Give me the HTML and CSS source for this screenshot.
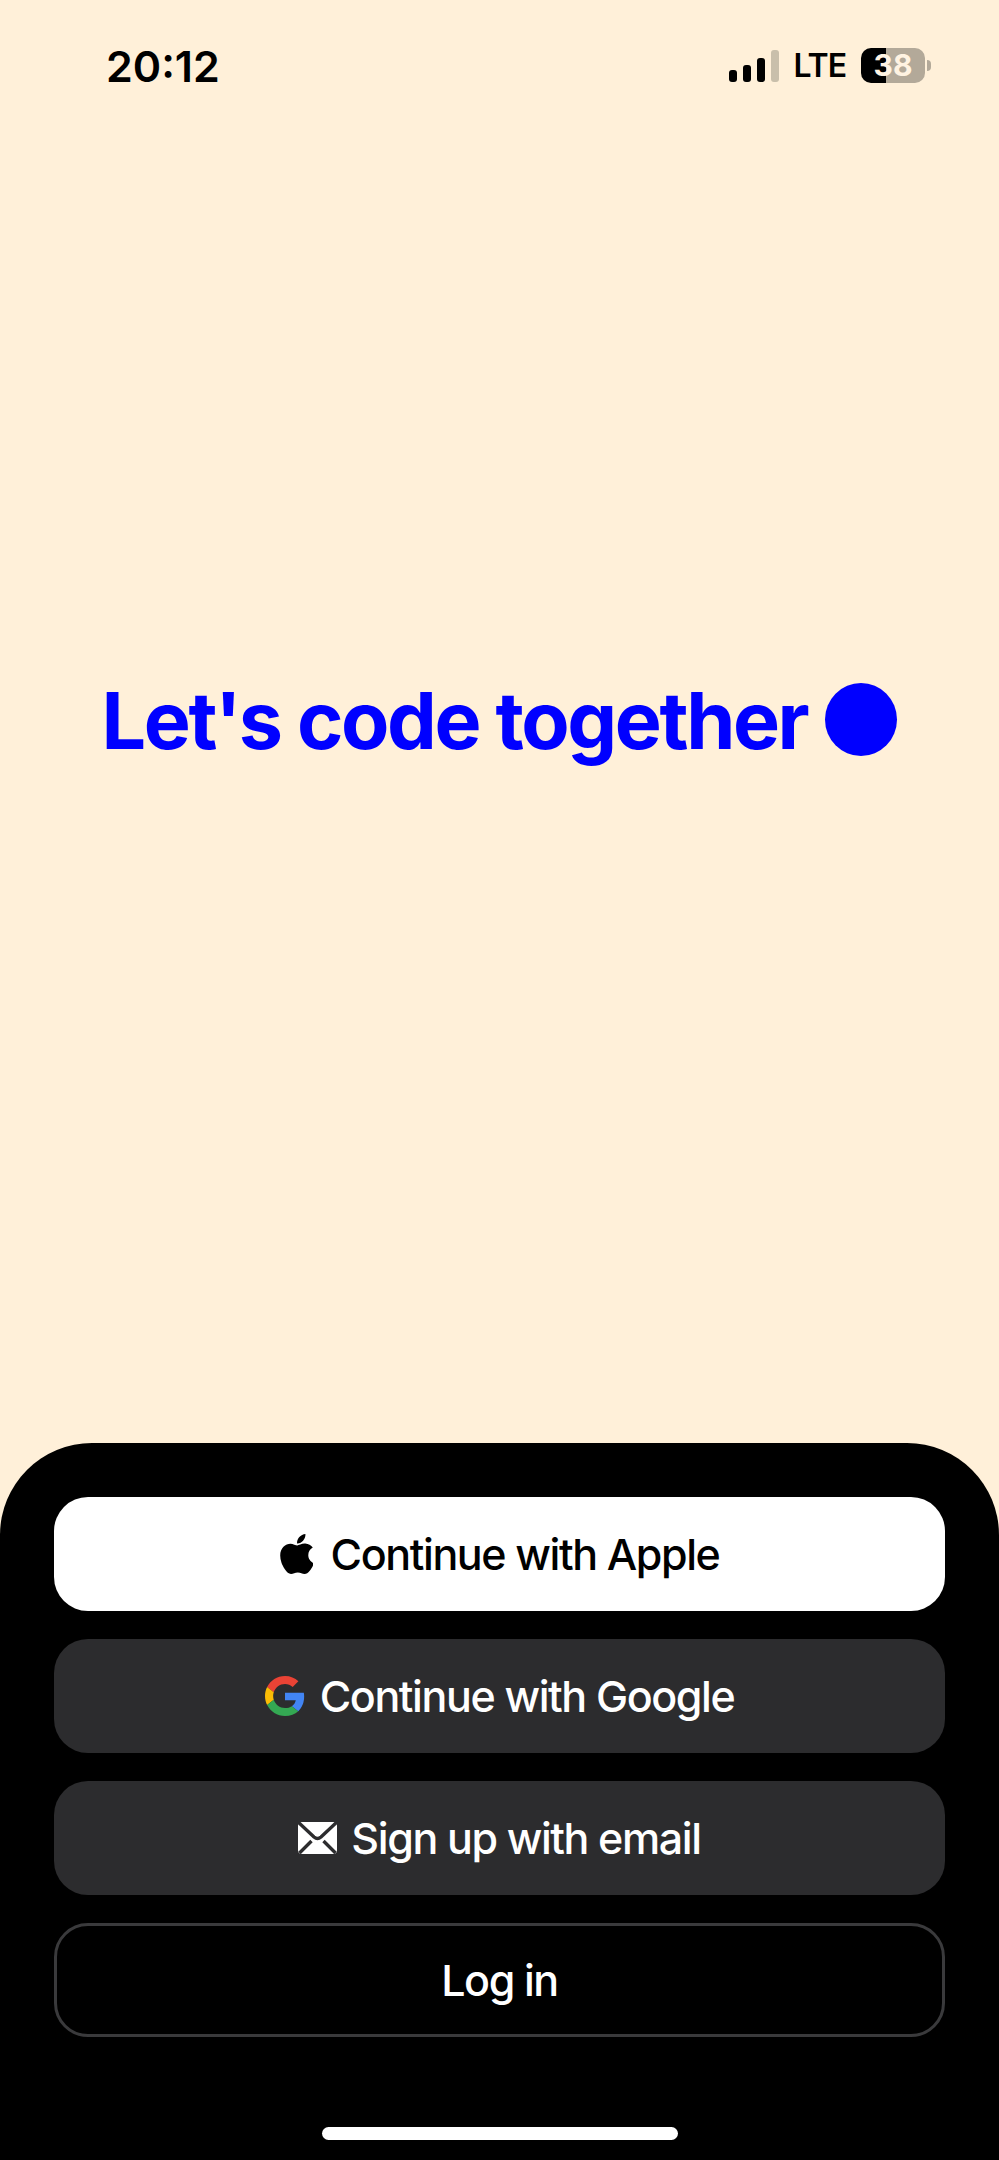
FILE: index.html
```html
<!DOCTYPE html>
<html lang="en">
<head>
<meta charset="utf-8">
<title>Let's code together</title>
<link rel="stylesheet" href="styles.css">
</head>
<body>
<div class="screen">
  <header class="status">
    <span class="time">20:12</span>
    <div class="indicators">
      <div class="signal">
        <span class="bar bar-1"></span>
        <span class="bar bar-2"></span>
        <span class="bar bar-3"></span>
        <span class="bar bar-4"></span>
      </div>
      <span class="network">LTE</span>
      <div class="battery-wrap">
        <div class="battery">38</div>
        <span class="nub"></span>
      </div>
    </div>
  </header>
  <main class="hero">
    <h1 class="title">Let's code together</h1>
    <span class="dot"></span>
  </main>
  <section class="sheet">
    <button class="btn btn-apple">
      <svg class="icon-apple" viewBox="4 32 365 448" aria-hidden="true"><path fill="#000" d="M318.7 268.7c-.2-36.7 16.4-64.4 50-84.8-18.8-26.9-47.2-41.7-84.7-44.6-35.5-2.8-74.3 20.7-88.5 20.7-15 0-49.4-19.7-76.4-19.7C63.3 141.2 4 184.8 4 273.5q0 39.3 14.4 81.2c12.8 36.7 59 126.7 107.2 125.2 25.2-.6 43-17.9 75.8-17.9 31.8 0 48.3 17.9 76.4 17.9 48.6-.7 90.4-82.5 102.6-119.3-65.2-30.7-61.7-90-61.7-91.9zm-56.6-164.2c27.3-32.4 24.8-61.9 24-72.5-24.1 1.4-52 16.4-67.9 34.9-17.5 19.8-27.8 44.3-25.6 71.9 26.1 2 49.9-11.4 69.5-34.3z"/></svg>
      Continue with Apple
    </button>
    <button class="btn btn-dark btn-google">
      <svg class="icon-google" viewBox="0 0 48 48" aria-hidden="true">
        <path fill="#EA4335" d="M24 9.5c3.54 0 6.71 1.22 9.21 3.6l6.85-6.85C35.9 2.38 30.47 0 24 0 14.62 0 6.51 5.38 2.56 13.22l7.98 6.19C12.43 13.72 17.74 9.5 24 9.5z"/>
        <path fill="#4285F4" d="M46.98 24.55c0-1.57-.15-3.09-.38-4.55H24v9.02h12.94c-.58 2.96-2.26 5.48-4.78 7.18l7.73 6c4.51-4.18 7.09-10.36 7.09-17.65z"/>
        <path fill="#FBBC05" d="M10.53 28.59c-.48-1.45-.76-2.99-.76-4.59s.27-3.14.76-4.59l-7.98-6.19C.92 16.46 0 20.12 0 24c0 3.88.92 7.54 2.56 10.78l7.97-6.19z"/>
        <path fill="#34A853" d="M24 48c6.48 0 11.93-2.13 15.89-5.81l-7.73-6c-2.15 1.45-4.92 2.3-8.16 2.3-6.26 0-11.57-4.22-13.47-9.91l-7.98 6.19C6.51 42.62 14.62 48 24 48z"/>
      </svg>
      Continue with Google
    </button>
    <button class="btn btn-dark btn-mail">
      <svg class="icon-mail" viewBox="0 0 39 32" aria-hidden="true">
        <rect width="39" height="32" rx="4" fill="#fff"/>
        <path d="M0 0 L16 15 Q19.5 18 23 15 L39 0" fill="none" stroke="#2c2c2e" stroke-width="3.4"/>
        <path d="M1.5 31 L13.5 19 M37.5 31 L25.5 19" fill="none" stroke="#2c2c2e" stroke-width="3.4"/>
      </svg>
      Sign up with email
    </button>
    <button class="btn btn-outline">Log in</button>
    <div class="home-row"><span class="home-bar"></span></div>
  </section>
</div>
</body>
</html>
```

FILE: styles.css
```css
* { box-sizing: border-box; }

html, body {
  margin: 0;
  padding: 0;
  background: #fff0d9;
}

.screen {
  width: 999px;
  height: 2160px;
  display: flex;
  flex-direction: column;
  overflow: hidden;
  font-family: Inter, "Liberation Sans", sans-serif;
}

.status {
  height: 120px;
  padding: 44px 68px 0 106px;
  display: flex;
  justify-content: space-between;
  align-items: flex-start;
  color: #000;
}

.time {
  font-size: 43px;
  font-weight: 600;
  line-height: 44px;
}

.indicators {
  display: flex;
  align-items: center;
  padding-top: 4px;
}

.signal {
  display: flex;
  align-items: flex-end;
  gap: 6px;
  height: 32px;
}

.bar {
  width: 8px;
  border-radius: 3px;
  background: #000;
}
.bar-1 { height: 12px; }
.bar-2 { height: 17px; }
.bar-3 { height: 24px; }
.bar-4 { height: 32px; background: #c9bfab; }

.network {
  margin-left: 14px;
  font-size: 32px;
  font-weight: 600;
  line-height: 34px;
  letter-spacing: -1px;
}

.battery-wrap {
  display: flex;
  align-items: center;
  margin-left: 15px;
}

.battery {
  width: 64px;
  height: 35px;
  border-radius: 10px;
  background: linear-gradient(90deg, #000 39%, #b3a999 39%);
  color: #fff3e2;
  font-size: 30px;
  font-weight: 700;
  line-height: 35px;
  text-align: center;
}

.nub {
  width: 4px;
  height: 11px;
  margin-left: 2px;
  border-radius: 0 4px 4px 0;
  background: #b3a999;
}

.hero {
  flex: 1;
  display: flex;
  align-items: center;
  justify-content: center;
  gap: 18px;
  padding-bottom: 124px;
  color: #0000ff;
}

.title {
  margin: 0;
  font-size: 79px;
  font-weight: 700;
  line-height: 90px;
  letter-spacing: -2.4px;
}

.dot {
  width: 72px;
  height: 73px;
  border-radius: 50%;
  background: #0000ff;
}

.sheet {
  height: 717px;
  padding: 54px 54px 0;
  border-radius: 92px 92px 0 0;
  background: #000;
  display: flex;
  flex-direction: column;
  gap: 28px;
}

.btn {
  height: 114px;
  flex: none;
  border: 0;
  border-radius: 34px;
  display: flex;
  align-items: center;
  justify-content: center;
  gap: 16px;
  font-family: inherit;
  font-size: 43px;
  font-weight: 500;
  letter-spacing: -1.4px;
}

.btn-apple { background: #fff; color: #000; gap: 18px; }
.btn-dark { background: #2c2c2e; color: #fff; }
.btn-google { gap: 15px; }
.btn-mail { gap: 14px; }
.btn-outline { background: #000; color: #fff; border: 3px solid #3a3a3c; }

.icon-apple { width: 33px; height: 40px; }
.icon-google { width: 40px; height: 40px; }
.icon-mail { width: 39px; height: 32px; }

.home-row {
  display: flex;
  justify-content: center;
  padding-top: 62px;
}

.home-bar {
  width: 356px;
  height: 13px;
  border-radius: 7px;
  background: #fff;
}
```
